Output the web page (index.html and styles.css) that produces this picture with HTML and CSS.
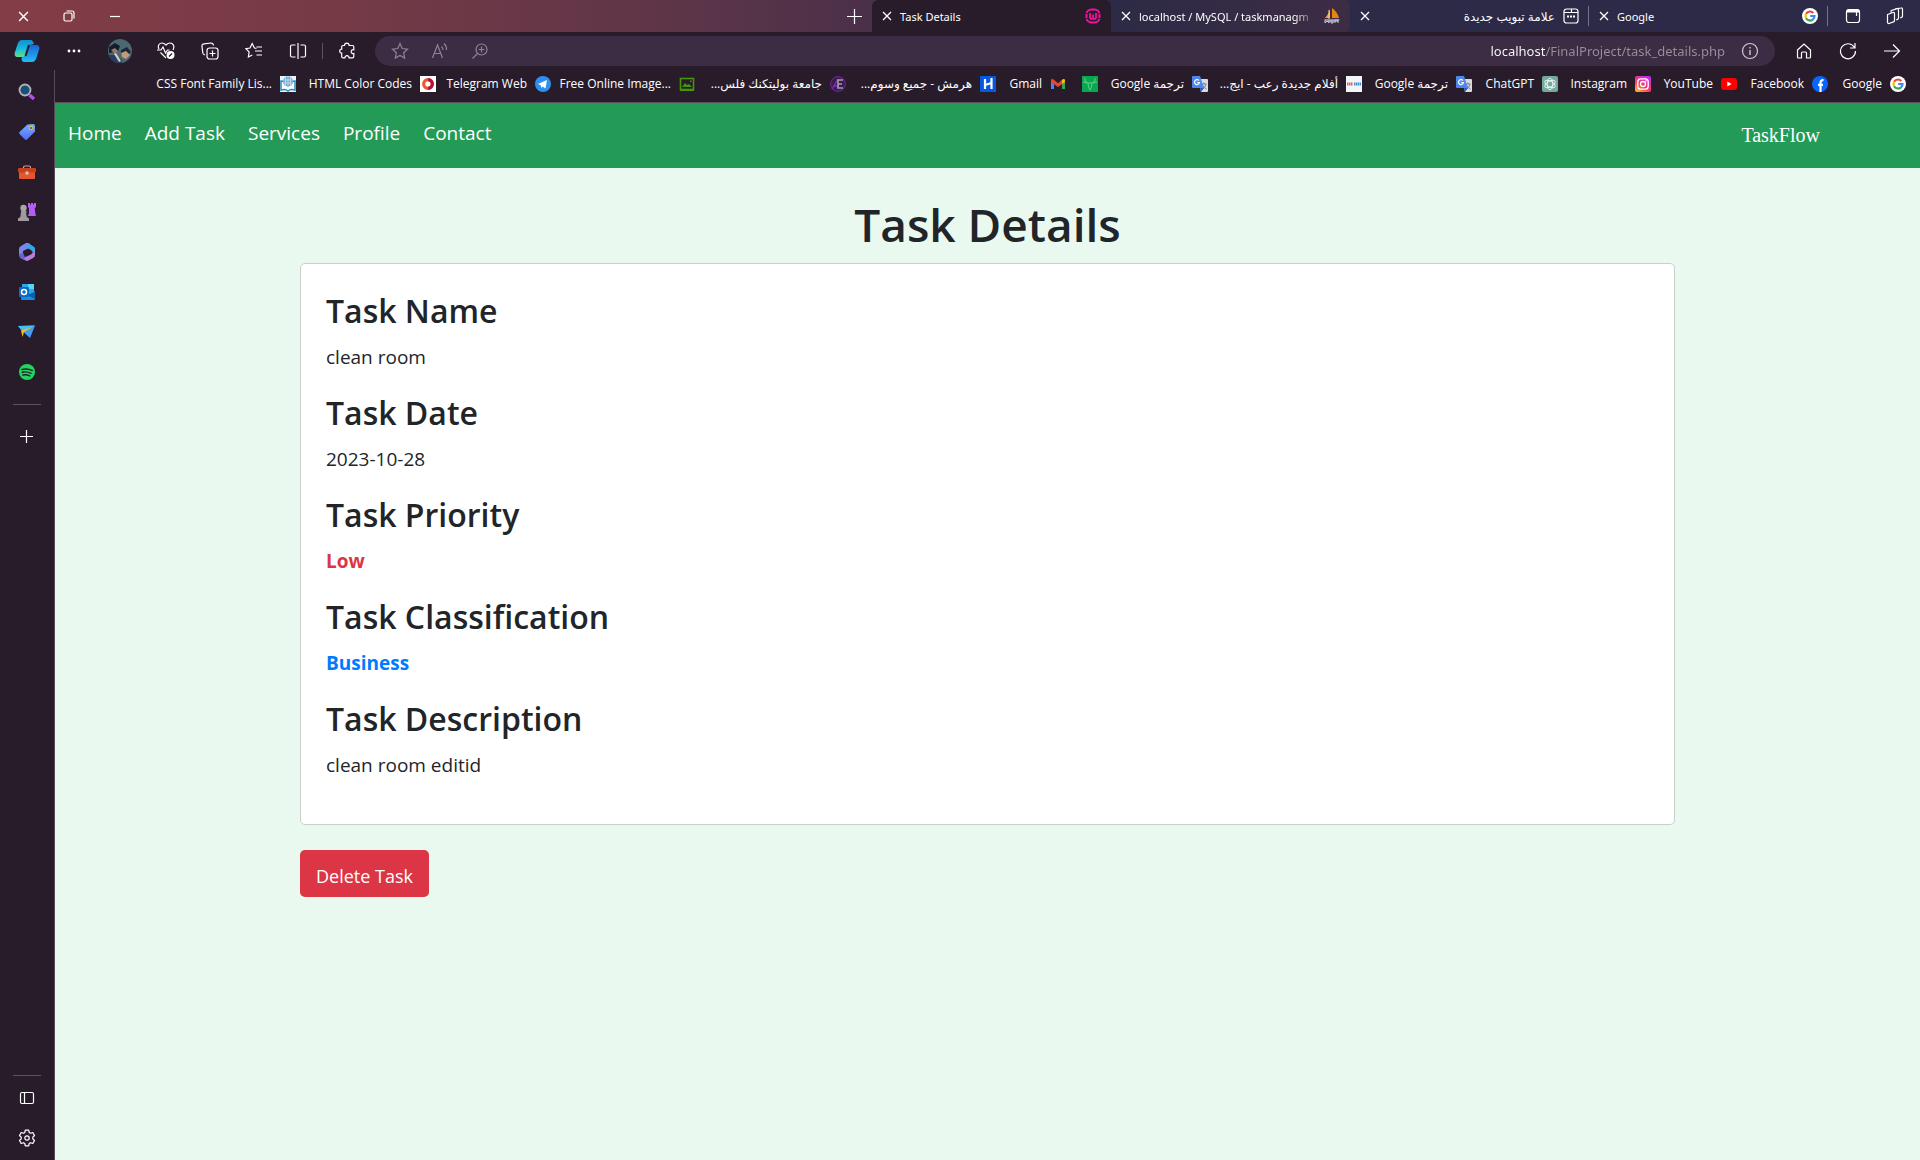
FILE: index.html
```html
<!DOCTYPE html>
<html lang="en">
<head>
<meta charset="utf-8">
<title>Task Details</title>
<link rel="stylesheet" href="styles.css">
</head>
<body>
<svg class="sprite" aria-hidden="true">
  <symbol id="close" viewBox="0 0 10 10"><path d="M1 1l8 8M9 1L1 9" fill="none" stroke="currentColor" stroke-width="1.3"/></symbol>
  <symbol id="google" viewBox="0 0 16 16"><circle cx="8" cy="8" r="8" fill="#fff"/><g fill="none" stroke-width="2.2"><path d="M11.300 4.900A4.500 4.500 0 0 0 4.100 5.800" stroke="#ea4335"/><path d="M4.100 5.800A4.500 4.500 0 0 0 4.100 10.200" stroke="#fbbc05"/><path d="M4.100 10.200A4.500 4.500 0 0 0 11 11.400" stroke="#34a853"/><path d="M11 11.400A4.500 4.500 0 0 0 12.500 8H8.200" stroke="#4285f4"/></g></symbol>
  <symbol id="translate" viewBox="0 0 16 16"><path d="M6 3h9a1 1 0 0 1 1 1v11a1 1 0 0 1-1 1H9z" fill="#dadce0"/><path d="M9.500 8h5M12 6.500V8M14 8c-.5 2.500-2 4-4 5M11 9.500c.8 1.600 2 2.800 3.500 3.500" stroke="#71808c" fill="none"/><path d="M1 0h7l4 12H1a1 1 0 0 1-1-1V1a1 1 0 0 1 1-1z" fill="#4d87ee"/><path d="M7 4.500A2.500 2.500 0 1 0 7.500 6.500H5.200" stroke="#fff" fill="none" stroke-width="1.200"/><path d="M8 12h4l-3 4z" fill="#2a56c6"/></symbol>
</svg>

<header class="titlebar">
  <div class="window-buttons">
    <button aria-label="Close"><svg width="11" height="11"><use href="#close"/></svg></button>
    <button aria-label="Restore"><svg width="12" height="12" viewBox="0 0 12 12" class="line"><rect x="1" y="3" width="8" height="8" rx="1.500"/><path d="M3.500 1H9a2 2 0 0 1 2 2v5.500"/></svg></button>
    <button aria-label="Minimize"><svg width="12" height="12" viewBox="0 0 12 12" class="line"><path d="M1 6.500h10"/></svg></button>
  </div>
  <button class="new-tab" aria-label="New tab"><svg width="15" height="15" viewBox="0 0 15 15" class="line"><path d="M7.500 0v15M0 7.500h15"/></svg></button>
  <nav class="tabs" aria-label="Tabs">
    <div class="tab tab-active">
      <button aria-label="Close tab"><svg width="10" height="10"><use href="#close"/></svg></button>
      <span class="tab-title">Task Details</span>
      <svg width="16" height="16" viewBox="0 0 16 16" fill="none" stroke="#f5109d"><rect x="1.500" y="1.500" width="13" height="13" rx="5" stroke-width="2"/><path d="M0 5.500h3M13 5.500h3M0 10.500h3M13 10.500h3" stroke="#281c2b" stroke-width=".8"/><path d="M5 5v4.500a1.500 1.500 0 0 0 3 0V6.500v3a1.500 1.500 0 0 0 3 0V5" stroke-width="1.800"/></svg>
    </div>
    <div class="tab tab-hover">
      <button aria-label="Close tab"><svg width="10" height="10"><use href="#close"/></svg></button>
      <span class="tab-title tab-fade">localhost / MySQL / taskmanagm</span>
      <svg width="16" height="16" viewBox="0 0 16 16"><path d="M6 1v9H1C3 8 5 5 6 1z" fill="#f9a02c"/><path d="M8 0c4 3 6 6 7 10H8z" fill="#e8860c"/><path d="M5 2v9" stroke="#fdd08a"/><path d="M0 11h16l-2 3H2z" fill="#8a86a8"/><path d="M1 12v3l2-2 2 2v-3M7 12v3h2v-3M11 15v-3h3v3" fill="none" stroke="#c8c5da"/></svg>
    </div>
    <div class="tab tab-divided">
      <button aria-label="Close tab"><svg width="10" height="10"><use href="#close"/></svg></button>
      <span class="tab-title tab-rtl" dir="rtl">علامة تبويب جديدة</span>
      <svg width="16" height="16" viewBox="0 0 16 16" class="line"><path d="M1 12.500V3.500a2.500 2.500 0 0 1 2.500-2.500h9A2.500 2.500 0 0 1 15 3.500v9a2.500 2.500 0 0 1-2.500 2.500h-9A2.500 2.500 0 0 1 1 12.500zM1 4.500h7.500V1.500M8.500 4.500H15"/><path d="M4 8.500h2M7 8.500h2M10 8.500h2" stroke-width="1.800"/></svg>
    </div>
    <div class="tab tab-divided">
      <button aria-label="Close tab"><svg width="10" height="10"><use href="#close"/></svg></button>
      <span class="tab-title">Google</span>
      <svg width="16" height="16"><use href="#google"/></svg>
    </div>
  </nav>
  <div class="tab-tools">
    <button aria-label="Tab actions"><svg width="16" height="16" viewBox="0 0 16 16" class="line"><rect x="1.500" y="1.500" width="13" height="13" rx="2.500"/><path d="M2 3h12" stroke-width="3"/><path d="M11.500 4v4"/></svg></button>
    <button aria-label="Workspaces"><svg width="18" height="18" viewBox="0 0 18 18" class="line"><path d="M1.500 7.500L7 5.500a1 1 0 0 1 1.500 1v7a1.500 1.500 0 0 1-1 1.400L3 16.500a1.200 1.200 0 0 1-1.500-1.200zM5 5.500V4.300a1 1 0 0 1 .8-1L11 1.800a1 1 0 0 1 1.500 1V11a1.500 1.500 0 0 1-1 1.400l-1.200.5M9.500 2V1.800L15 1a1.200 1.200 0 0 1 1.500 1.200V9a1.500 1.500 0 0 1-1 1.400l-1.200.5"/></svg></button>
  </div>
</header>

<div class="toolbar">
  <button class="tool tool-copilot" aria-label="Copilot"><svg width="26" height="24" viewBox="0 0 26 24"><defs><linearGradient id="cp1" x1="0" y1="0" x2="0" y2="1"><stop offset="0" stop-color="#0f8fd8"/><stop offset=".5" stop-color="#16b9dc"/><stop offset="1" stop-color="#62e08a"/></linearGradient><linearGradient id="cp2" x1="0" y1="0" x2="0" y2="1"><stop offset="0" stop-color="#1a63d8"/><stop offset="1" stop-color="#23bdf5"/></linearGradient></defs><path d="M8 1h8c3 0 3 2 4 4l-5 1-3 10-2 2H4c-3 0-4-2-3-5L4 4c1-2 2-3 4-3z" fill="url(#cp1)"/><path d="M18 23h-7c-3 0-4-2-3-5l3-1 3-10 2-1h6c3 0 4 2 3 5l-3 9c-1 2-2 3-4 3z" fill="url(#cp2)"/><path d="M15 6l-3.500 11" stroke="#281c2b" stroke-width="2" fill="none"/></svg></button>
  <button class="tool" aria-label="Settings and more"><svg width="14" height="4" viewBox="0 0 14 4" fill="#fff"><circle cx="2" cy="2" r="1.400"/><circle cx="7" cy="2" r="1.400"/><circle cx="12" cy="2" r="1.400"/></svg></button>
  <button class="tool tool-avatar" aria-label="Profile"><svg width="24" height="24" viewBox="0 0 24 24"><defs><clipPath id="av"><circle cx="12" cy="12" r="12"/></clipPath></defs><g clip-path="url(#av)"><path d="M0 0h24v24H0z" fill="#4b6970"/><path d="M1 8l6-4 5 3-2 5-9 2z" fill="#171a2c"/><path d="M3 11l4-2 3 3-3 3z" fill="#9a7a68"/><path d="M13 11l6-3 4 5-3 3-7 0z" fill="#20263a"/><path d="M13 14l5-2 4 4-4 4-4-2z" fill="#c09b80"/><path d="M0 16l7 0 7 5-1 3H0z" fill="#263c68"/><path d="M6 15l2-1 5 8-2 1z" fill="#d4d0bd"/></g></svg></button>
  <button class="tool" aria-label="Browser essentials"><svg width="18" height="18" viewBox="0 0 18 18" class="line"><path d="M2 7C0 3 3 1 5 1c2 0 3 1 4 2 1-1 2-2 4-2 3 0 5 3 3 7M3.500 10.500L9 16M0 8h4l2-3 2.500 6L10.500 8h2"/><circle cx="13.500" cy="13" r="4" fill="#fff" stroke="none"/><path d="M12 14.500l3-3" stroke="#281c2b"/></svg></button>
  <button class="tool" aria-label="Collections"><svg width="18" height="18" viewBox="0 0 18 18" class="line"><rect x="6" y="6" width="11" height="11" rx="2.500"/><path d="M11.500 8.500v6M8.500 11.500h6M4 13c-1.500-.5-2-1-2.200-2L1 4.500C.8 3 1.500 2 3 1.900L10 1c1.500 0 2.300.8 2.500 2.500"/></svg></button>
  <button class="tool" aria-label="Favorites"><svg width="18" height="18" viewBox="0 0 18 18" class="line"><path d="M11.500 6.300L9.400 6 7.200 1.500 5 6 .9 6.700l3.200 3.200L3.400 15 7.300 13M11.500 5H17M10 9h7M11.500 13H17"/></svg></button>
  <button class="tool" aria-label="Split screen"><svg width="18" height="18" viewBox="0 0 18 18" class="line"><path d="M9 1v16M6.500 3H3a1.500 1.500 0 0 0-1.500 1.500v9A1.500 1.500 0 0 0 3 15h3.500M11.500 3H15a1.500 1.500 0 0 1 1.500 1.500v9A1.500 1.500 0 0 1 15 15h-3.500"/></svg></button>
  <span class="tool-divider"></span>
  <button class="tool" aria-label="Extensions"><svg width="18" height="18" viewBox="0 0 18 18" class="line"><path d="M6 3.500a2.300 2.300 0 1 1 4.600 0H14a1.300 1.300 0 0 1 1.300 1.300v3a2 2 0 1 0 0 3.800v3a1.300 1.300 0 0 1-1.300 1.200h-3.400a2 2 0 1 0-4.200 0H4.500a1.300 1.300 0 0 1-1.300-1.200v-3.400a2 2 0 1 1 0-4V4.800a1.300 1.300 0 0 1 1.300-1.300z" transform="translate(.5 0)"/></svg></button>
  <div class="address">
    <button class="address-tool" aria-label="Add to favorites"><svg width="18" height="18" viewBox="0 0 18 18" class="line"><path d="M9 1.500l2.200 5 5.300.6-3.900 3.600 1.100 5.300L9 13.400 4.300 16l1.100-5.300L1.500 7.100l5.300-.6z"/></svg></button>
    <button class="address-tool" aria-label="Read aloud"><svg width="18" height="18" viewBox="0 0 18 18" class="line"><path d="M1.500 16L6.500 3l5 13M3.200 11.500h6.600M10.500 4.500c1.200 1 1.500 2 1.500 3.500M13 1.500c2 1.800 2.700 4 2.500 6.500"/></svg></button>
    <button class="address-tool" aria-label="Zoom"><svg width="18" height="18" viewBox="0 0 18 18" class="line"><circle cx="10.500" cy="7.500" r="5.500"/><path d="M6.500 11.500l-5 5M10.500 4.500v6M7.500 7.500h6"/></svg></button>
    <input class="address-input" type="text" aria-label="Address" value="localhost/FinalProject/task_details.php">
    <button class="address-info" aria-label="Site information"><svg width="18" height="18" viewBox="0 0 18 18" class="line"><circle cx="9" cy="9" r="7.500"/><path d="M9 8v5M9 5v1.500" stroke-width="1.400"/></svg></button>
  </div>
  <button class="tool" aria-label="Home"><svg width="18" height="18" viewBox="0 0 18 18" class="line"><path d="M2.500 8L9 2l6.500 6v7a1 1 0 0 1-1 1h-3v-5a1 1 0 0 0-1-1h-3a1 1 0 0 0-1 1v5h-3a1 1 0 0 1-1-1z"/></svg></button>
  <button class="tool" aria-label="Refresh"><svg width="18" height="18" viewBox="0 0 18 18" class="line"><path d="M15.500 5.500A7.500 7.500 0 1 0 16.500 9M16 1v5h-5"/></svg></button>
  <button class="tool" aria-label="Forward"><svg width="18" height="18" viewBox="0 0 18 18" class="line"><path d="M1 9h16M10 2.500L16.500 9 10 15.500"/></svg></button>
</div>

<div class="workspace">
  <aside class="sidebar">
    <button aria-label="Search"><svg width="18" height="18" viewBox="0 0 18 18"><circle cx="7" cy="7" r="5.500" fill="#1b4f78" stroke="#b5b3b5" stroke-width="1.800"/><path d="M11.500 12l4.500 4" stroke="#b94ef0" stroke-width="3.400"/></svg></button>
    <button aria-label="Shopping"><svg width="18" height="18" viewBox="0 0 18 18"><defs><linearGradient id="tg" x1="0" y1="0" x2="0" y2="1"><stop stop-color="#6bb4ff"/><stop offset="1" stop-color="#5a68f5"/></linearGradient></defs><path d="M9.500 1.500L15 1a2 2 0 0 1 2 2v5.500L9 16.500a1.500 1.500 0 0 1-2 0L1.500 11a1.500 1.500 0 0 1 0-2z" fill="url(#tg)"/><circle cx="13" cy="5" r="1.600" fill="#4c4b70" stroke="#e5bd30" stroke-width="1.200"/></svg></button>
    <button aria-label="Tools"><svg width="18" height="18" viewBox="0 0 18 18"><path d="M5.500 6V4.500A1.500 1.500 0 0 1 7 3h4a1.500 1.500 0 0 1 1.500 1.500V6" stroke="#b8aaa5" fill="none" stroke-width="1.200"/><rect x="1" y="8" width="16" height="8" rx="1" fill="#e4572e"/><rect y="5" width="18" height="4.500" rx="1" fill="#c8401d"/><circle cx="9" cy="10" r="1.700" fill="#d2c8c4"/></svg></button>
    <button aria-label="Games"><svg width="18" height="18" viewBox="0 0 18 18"><path d="M10 0h2v1.500h1V0h2v1.500h1V0h2v4l-1.300 1 .7 5.500.6 2.500h-8l1-3L11 5l-1-1z" fill="#b45cf6"/><circle cx="5.500" cy="5" r="3.200" fill="#a8a6a8"/><path d="M3 8h5.500v1.500H8l.8 4.500L11 15.500V18H0v-2.500L2.300 14 3 9.500z" fill="#9d9b9d"/></svg></button>
    <button aria-label="Microsoft 365"><svg width="18" height="18" viewBox="0 0 18 18"><path d="M8 0L3 3C1.500 4 1 5 1 6.500V12l4 1V8l6-3 1-4C10.500 0 9.500-.5 8 0z" fill="#7b86e8"/><path d="M11 .5l4.500 3C16.500 4 17 5 17 6v6l-4-5-4-2z" fill="#35a6ec"/><path d="M17 7v5c0 1.500-1 2.500-2 3l-4.500 2.500c-1 .6-2 .6-3 0L4 15.500l9-4z" fill="#b57de0"/><path d="M1 11l4-1 2 4-1 3-3-1.500C1.500 14.500 1 13 1 11z" fill="#6a63c8"/></svg></button>
    <button aria-label="Outlook"><svg width="18" height="18" viewBox="0 0 18 18"><path d="M4 1h12v10H4z" fill="#28a8ea"/><path d="M10 1h6v5h-6z" fill="#50d9ff"/><path d="M3 9l7 3 7-4v8a1 1 0 0 1-1 1H4a1 1 0 0 1-1-1z" fill="#1490df"/><path d="M17 9v7L9 12z" fill="#0a5fa8"/><rect x="1" y="4" width="10" height="10" rx="1" fill="#0a6ac4"/><circle cx="6" cy="9" r="2.500" fill="none" stroke="#fff" stroke-width="1.500"/></svg></button>
    <button aria-label="Drop"><svg width="18" height="18" viewBox="0 0 18 18"><path d="M0 3l17-.5L12 15 6.500 10z" fill="#3f9df5"/><path d="M0 3l17-.5L4 8z" fill="#47bdf6"/><path d="M3 7.500L15 4 6 9l-1.500 5z" fill="#f7bd1c"/></svg></button>
    <button aria-label="Spotify"><svg width="18" height="18" viewBox="0 0 18 18"><circle cx="9" cy="9" r="8" fill="#1ed760"/><path d="M4 6.500c3.500-1 7-.6 10.200 1M4.300 9.300c3-.8 6-.5 8.800 1M4.800 12c2.600-.6 4.800-.4 7 .9" fill="none" stroke="#241d29" stroke-width="1.400" stroke-linecap="round"/></svg></button>
    <hr>
    <button aria-label="Customize"><svg width="14" height="14" viewBox="0 0 14 14" class="line"><path d="M6.500 0v13M0 6.500h13"/></svg></button>
    <div class="sidebar-end">
      <hr>
      <button aria-label="Toggle sidebar"><svg width="16" height="16" viewBox="0 0 16 16" class="line"><rect x="1.500" y="2.500" width="13" height="11" rx="1.500"/><path d="M5.500 2.500v11"/></svg></button>
      <button aria-label="Settings"><svg width="18" height="18" viewBox="0 0 18 18" class="line"><path d="M7.300 1.200h3.400l.5 2.300 1.300.8 2.300-.8 1.700 3-1.700 1.700v1.600l1.700 1.700-1.700 3-2.300-.8-1.300.8-.5 2.300H7.300l-.5-2.300-1.300-.8-2.300.8-1.700-3 1.700-1.700V8.200L1.500 6.500l1.700-3 2.300.8 1.300-.8z" stroke-linejoin="round"/><circle cx="9" cy="9" r="2.200"/></svg></button>
    </div>
  </aside>

  <div class="view">
    <nav class="bookmarks" aria-label="Bookmarks">
      <a href="#">CSS Font Family Lis...<svg width="16" height="16" viewBox="0 0 16 16"><path d="M0 0h16v16H0z" fill="#e8f3fa"/><path d="M1 5v9c3-1 5-1 7 1 2-2 4-2 7-1V5c-3 0-5 2-7 5-2-3-4-5-7-5z" fill="#fff" stroke="#2b8fc6" stroke-width="1.600"/><circle cx="8" cy="5.500" r="5" fill="#6fa9cf"/><path d="M3.500 4h9M3.500 7h9M8 1v10M5.500 1.500v8M10.500 1.500v8" stroke="#e8f3fa" stroke-width=".6"/></svg></a>
      <a href="#">HTML Color Codes<svg width="16" height="16" viewBox="0 0 16 16"><path d="M0 0h16v16H0z" fill="#fff"/><circle cx="8" cy="8" r="4.300" fill="none" stroke="#f2572b" stroke-width="3.200"/><path d="M8 3.700a4.300 4.300 0 0 1 0 8.600" fill="none" stroke="#b3123f" stroke-width="3.200"/></svg></a>
      <a href="#">Telegram Web<svg width="16" height="16" viewBox="0 0 16 16"><circle cx="8" cy="8" r="8" fill="#2f8fef"/><path d="M3 8l9-4-1.500 8.500-3-2L6 12V9.500z" fill="#fff"/></svg></a>
      <a href="#">Free Online Image...<svg width="16" height="16" viewBox="0 0 16 16"><rect x="1.500" y="2.500" width="13" height="11" fill="none" stroke="#469408" stroke-width="1.600"/><path d="M3 11l3-4 2 2 2-1 3 3zM11 4.500h1.500V6H11zM1 13h14v2H1z" fill="#469408"/></svg></a>
      <a href="#"><span dir="rtl">جامعة بوليتكنك فلس...</span><svg width="16" height="16" viewBox="0 0 16 16"><circle cx="8" cy="8" r="7.400" fill="#35204a" stroke="#7d1fa8"/><path d="M2 13L8 3M4 10h4" stroke="#8e2ab8" stroke-width="1.300"/><path d="M13 4H8v8h5M8 8h4" fill="none" stroke="#a79bb3" stroke-width="1.600"/></svg></a>
      <a href="#"><span dir="rtl">هرمش - جميع وسوم...</span><svg width="16" height="16" viewBox="0 0 16 16"><path d="M0 0h16v16H0z" fill="#0857e0"/><path d="M5 3v10M11.500 2v11M5 9l6.500-2" stroke="#fff" stroke-width="2.200"/></svg></a>
      <a href="#">Gmail<svg width="16" height="16" viewBox="0 0 16 16"><path d="M1 4v9h3V6z" fill="#4285f4"/><path d="M15 4v9h-3V6z" fill="#34a853"/><path d="M1 3.500L3 3l5 4.200L13 3l2 .5V6l-7 5-7-5z" fill="#ea4335"/><path d="M12 4l1.500-1a1.500 1.500 0 0 1 1.500 1.500V6l-3 2z" fill="#fbbc04"/></svg></a>
      <a href="#" aria-label="Deer"><svg width="16" height="16" viewBox="0 0 16 16"><path d="M0 0h16v16H0z" fill="#06a94d"/><path d="M3 2v3l3 2M13 2v3l-3 2M1 6l4 1M15 6l-4 1M6 7h4l-.5 4L8 14l-1.500-3z" fill="none" stroke="#7fd39b" stroke-width=".8"/></svg></a>
      <a href="#"><span>Google ترجمة</span><svg width="16" height="16"><use href="#translate"/></svg></a>
      <a href="#"><span dir="rtl">أفلام جديدة رعب - ايج...</span><svg width="16" height="16" viewBox="0 0 16 16"><path d="M0 0h16v16H0z" fill="#f4f5f8"/><path d="M1 8h6" stroke="#e2604c" stroke-width="3" stroke-dasharray="1.500 .5"/><path d="M8 8h7" stroke="#3d91cc" stroke-width="3" stroke-dasharray="1.500 .5"/></svg></a>
      <a href="#"><span>Google ترجمة</span><svg width="16" height="16"><use href="#translate"/></svg></a>
      <a href="#">ChatGPT<svg width="16" height="16" viewBox="0 0 16 16"><rect width="16" height="16" rx="2" fill="#74aa9c"/><g fill="none" stroke="#fff" stroke-width=".8"><ellipse cx="8" cy="8" rx="2.800" ry="5.800"/><ellipse cx="8" cy="8" rx="2.800" ry="5.800" transform="rotate(60 8 8)"/><ellipse cx="8" cy="8" rx="2.800" ry="5.800" transform="rotate(120 8 8)"/></g></svg></a>
      <a href="#">Instagram<svg width="16" height="16" viewBox="0 0 16 16"><defs><linearGradient id="ig" x1="0" y1="1" x2=".7" y2="0"><stop stop-color="#ffd21f"/><stop offset=".45" stop-color="#ff3d5a"/><stop offset="1" stop-color="#c42be8"/></linearGradient></defs><rect width="16" height="16" rx="2" fill="url(#ig)"/><g fill="none" stroke="#fff" stroke-width="1.300"><rect x="2.800" y="2.800" width="10.400" height="10.400" rx="3"/><circle cx="8" cy="8" r="2.500"/></g><circle cx="11" cy="5" r=".8" fill="#fff"/></svg></a>
      <a href="#">YouTube<svg width="16" height="16" viewBox="0 0 16 16"><rect y="2" width="16" height="12" rx="3" fill="#f00"/><path d="M6.300 5.500v5L10.600 8z" fill="#fff"/></svg></a>
      <a href="#">Facebook<svg width="16" height="16" viewBox="0 0 16 16"><circle cx="8" cy="8" r="8" fill="#0866ff"/><path d="M8.500 16V7c0-2 .8-3 3-2.800M6 8.800h5" fill="none" stroke="#fff" stroke-width="2.200"/></svg></a>
      <a href="#">Google<svg width="16" height="16"><use href="#google"/></svg></a>
    </nav>

    <div class="page">
      <nav class="navbar" aria-label="Main">
        <div class="nav-links">
          <a href="#">Home</a>
          <a href="#">Add Task</a>
          <a href="#">Services</a>
          <a href="#">Profile</a>
          <a href="#">Contact</a>
        </div>
        <a class="brand" href="#">TaskFlow</a>
      </nav>
      <main class="container">
        <h1>Task Details</h1>
        <section class="card">
          <h3>Task Name</h3>
          <p>clean room</p>
          <h3>Task Date</h3>
          <p>2023-10-28</p>
          <h3>Task Priority</h3>
          <p class="priority">Low</p>
          <h3>Task Classification</h3>
          <p class="classification">Business</p>
          <h3>Task Description</h3>
          <p>clean room editid</p>
        </section>
        <button class="delete">Delete Task</button>
      </main>
    </div>
  </div>
</div>
</body>
</html>
```
FILE: styles.css
```css
* { box-sizing: border-box; }

body {
  margin: 0;
  min-height: 100vh;
  display: flex;
  flex-direction: column;
  background: #281c2b;
  color: #fff;
  font-family: "Noto Sans", "DejaVu Sans", sans-serif;
  font-size: 11px;
}

button {
  display: flex;
  align-items: center;
  justify-content: center;
  padding: 0;
  border: 0;
  background: none;
  color: inherit;
  font: inherit;
}

a { color: inherit; text-decoration: none; }
svg { flex: none; display: block; }
.sprite { position: absolute; width: 0; height: 0; }
.line { fill: none; stroke: currentColor; stroke-width: 1.2; }

/* Title bar */
.titlebar {
  display: flex;
  height: 32px;
  background: linear-gradient(90deg, #833d46 0, #753a46 18%, #5c3548 36%, #4b3049 45%, #2c2a47 58%, #2c2a47 100%);
}
.window-buttons { display: flex; }
.window-buttons button { width: 46px; }
.new-tab { width: 36px; margin-left: auto; }
.tabs { display: flex; }
.tab {
  display: flex;
  align-items: center;
  gap: 8px;
  width: 239px;
  padding: 0 10px;
}
.tab-active { background: #281c2b; border-radius: 6px 6px 0 0; }
.tab-hover { background: linear-gradient(90deg, #2c2a47, #3d2c44); border-radius: 6px; }
.tab-divided { background: linear-gradient(#77758a, #77758a) right center / 1px 20px no-repeat; }
.tab-title { flex: 1; white-space: nowrap; }
.tab-rtl { font-size: 12px; }
.tab-fade {
  -webkit-mask-image: linear-gradient(90deg, #000 88%, transparent);
  mask-image: linear-gradient(90deg, #000 88%, transparent);
}
.tab-tools { display: flex; padding: 0 4px; }
.tab-tools button { width: 42px; }

/* Toolbar */
.toolbar {
  display: flex;
  align-items: center;
  height: 38px;
  padding-right: 6px;
}
.tool { width: 44px; height: 38px; }
.tool-copilot { width: 52px; padding-left: 2px; }
.tool-avatar { width: 48px; }
.tool-divider { width: 1px; height: 16px; margin: 0 2px; background: #5d525f; }
.address {
  flex: 1;
  display: flex;
  align-items: center;
  height: 30px;
  margin: 0 7px 0 6px;
  padding: 0 5px;
  border-radius: 15px;
  background: #3c2d45;
}
.address-tool { width: 40px; height: 30px; color: #8d8491; }
.address-info { width: 40px; height: 30px; margin-left: 5px; color: #cfc9d2; }
.address-input {
  flex: 1;
  min-width: 0;
  border: 0;
  outline: 0;
  padding: 0;
  text-align: right;
  font-family: "Noto Sans", sans-serif;
  font-size: 13px;
  line-height: 20px;
  color: transparent;
  background: linear-gradient(90deg, #fff calc(100% - 180px), #96909a calc(100% - 180px));
  -webkit-background-clip: text;
  background-clip: text;
}

/* Sidebar and page area */
.workspace { flex: 1; display: flex; }
.sidebar {
  display: flex;
  flex-direction: column;
  width: 55px;
  padding: 2px 0;
  border-right: 1px solid #564b59;
}
.sidebar button { width: 54px; height: 40px; }
.sidebar hr {
  width: 28px;
  height: 1px;
  margin: 12px 13px;
  border: 0;
  background: #5d525f;
}
.sidebar-end { margin-top: auto; }
.sidebar-end hr { margin: 2px 13px; }
.view { flex: 1; min-width: 0; display: flex; flex-direction: column; }

.bookmarks {
  display: grid;
  grid-template-columns: 134px 124px 99px 128px 135px 134px 54px 16px 94px 138px 94px 70px 77px 70px 75px 62px;
  gap: 16px;
  align-items: center;
  justify-content: end;
  height: 33px;
  padding: 0 14px 5px 0;
  border-bottom: 1px solid #5b505c;
  font-family: "Open Sans", "Noto Sans", "DejaVu Sans", sans-serif;
  font-size: 12px;
}
.bookmarks a {
  display: flex;
  align-items: center;
  justify-content: flex-end;
  gap: 8px;
  white-space: nowrap;
}

/* Page */
.page {
  flex: 1;
  background: #e9f9ef;
  color: #212529;
  font-family: "Open Sans", "Noto Sans", sans-serif;
  font-size: 19px;
  line-height: 30px;
}
.navbar {
  display: flex;
  align-items: flex-start;
  justify-content: space-between;
  height: 65px;
  padding: 15px 100px 0 13px;
  background: #239b56;
  color: #fff;
}
.nav-links { display: flex; gap: 23px; }
.brand {
  padding-top: 2px;
  font-family: "Liberation Serif", serif;
  font-size: 20px;
}
.container { width: 90%; max-width: 1375px; margin: 0 auto; padding-top: 26px; }
h1, h3, p { margin: 0; }
h1 { margin-bottom: 9px; text-align: center; font-size: 46px; font-weight: 600; line-height: 60px; }
.card {
  padding: 26px 25px 24px;
  border: 1px solid #c9cfcb;
  border-radius: 5px;
  background: #fff;
}
h3 { margin-bottom: 10px; font-size: 32px; font-weight: 600; line-height: 42px; }
.card p { margin-bottom: 20px; }
.priority { color: #dc3545; font-weight: 700; }
.classification { color: #007bff; font-weight: 700; }
.delete {
  height: 47px;
  margin-top: 25px;
  padding: 4px 16px 0;
  border-radius: 5px;
  background: #dc3545;
  color: #fff;
  font-size: 18px;
}
```
